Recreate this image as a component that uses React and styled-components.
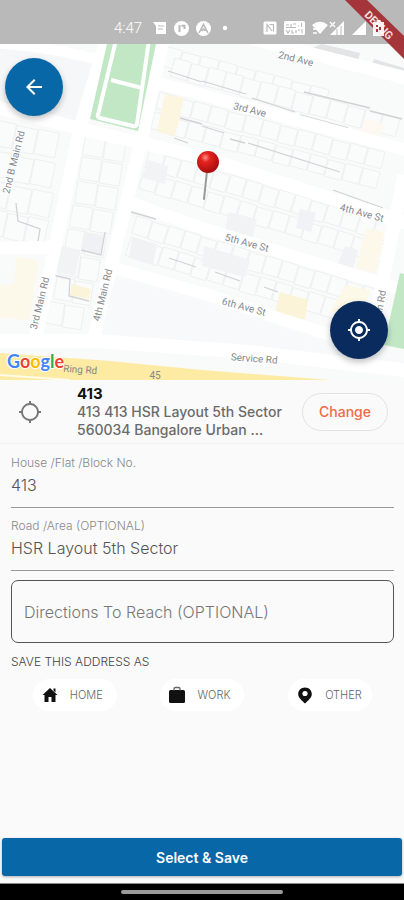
import { useState } from 'react'
import styled, { createGlobalStyle } from 'styled-components'
import { MdArrowBack, MdGpsFixed, MdGpsNotFixed } from 'react-icons/md'

const GlobalStyle = createGlobalStyle`
    * {
        box-sizing: border-box;
    }
    body {
        margin: 0;
        background: #fafafa;
        font-family: Inter, "Noto Sans", sans-serif;
    }
    button, input {
        font-family: inherit;
    }
`

const Page = styled.div`
    display: flex;
    flex-direction: column;
    min-height: 100vh;
    background: #fafafa;
`

const StatusBar = styled.header`
    position: relative;
    display: flex;
    align-items: center;
    justify-content: space-between;
    height: 44px;
    padding: 12px 20px 0 114px;
    background: #b9b9b9;
    color: #fff;
`

const StatusGroup = styled.div`
    position: relative;
    z-index: 2;
    display: flex;
    align-items: center;
    gap: 7px;

    & svg {
        display: block;
        flex-shrink: 0;
    }
`

const Clock = styled.time`
    margin-right: 4px;
    font-family: Roboto, sans-serif;
    font-size: 15px;
    font-weight: 300;
`

const DebugBanner = styled.svg`
    position: absolute;
    top: 0;
    right: 0;
    z-index: 1;
`

const MapArea = styled.section`
    position: relative;
    height: 336px;
    background: #f8f9fa;
`

const MapDrawing = styled.svg`
    display: block;
    width: 100%;
    height: 100%;
    font-family: Roboto, sans-serif;
`

const RoundButton = styled.button`
    position: absolute;
    display: flex;
    align-items: center;
    justify-content: center;
    width: 58px;
    height: 58px;
    padding: 0;
    border: 0;
    border-radius: 50%;
    color: #fff;
    font-size: 24px;
    box-shadow: 0 3px 6px rgba(0,0,0,.25);
`

const BackButton = styled(RoundButton)`
    top: 14px;
    left: 5px;
    background: #0868a7;
`

const LocateButton = styled(RoundButton)`
    right: 16px;
    bottom: 21px;
    background: #0a2b5e;
`

const AddressBar = styled.section`
    display: flex;
    align-items: center;
    height: 64px;
    padding: 0 16px 0 18px;
    border-bottom: 1px solid #f1f1f1;

    & > svg {
        flex-shrink: 0;
        font-size: 24px;
        color: #777;
    }
`

const AddressText = styled.div`
    flex: 1;
    min-width: 0;
    margin-left: 35px;
    font-size: 14px;
    font-weight: 500;
    line-height: 18px;
    color: #6a6a6a;
`

const AddressName = styled.h1`
    margin: 0;
    font-size: 15px;
    font-weight: 700;
    line-height: 18px;
    color: #111;
`

const ChangeButton = styled.button`
    flex-shrink: 0;
    height: 38px;
    padding: 0 16px;
    border: 1px solid #e3e3e5;
    border-radius: 19px;
    background: #fafafa;
    color: #ef6b48;
    font-size: 14px;
    font-weight: 500;
`

const Form = styled.form`
    display: flex;
    flex: 1;
    flex-direction: column;
`

const Fields = styled.div`
    display: flex;
    flex-direction: column;
    padding: 10px 10px 0 11px;
`

const Field = styled.div`
    display: flex;
    flex-direction: column;
    height: 54px;
    margin-bottom: 9px;
    border-bottom: 1px solid #999;

    & label {
        font-size: 12px;
        font-weight: 300;
        line-height: 18px;
        color: #888;
    }

    & input {
        width: 100%;
        height: 26px;
        padding: 0;
        border: 0;
        outline: 0;
        background: transparent;
        color: #555;
        font-size: 16px;
        font-weight: 300;
    }
`

const Directions = styled.input`
    height: 63px;
    padding: 0 12px;
    border: 1px solid #555;
    border-radius: 7px;
    outline: 0;
    background: transparent;
    color: #444;
    font-size: 16px;
    font-weight: 300;

    &::placeholder {
        color: #777;
        opacity: 1;
    }
`

const SaveAs = styled.fieldset`
    margin: 0;
    padding: 0;
    border: 0;

    & legend {
        padding: 10px 0 8px;
        font-size: 12px;
        font-weight: 300;
        line-height: 18px;
        color: #444;
    }
`

const Chips = styled.div`
    display: grid;
    grid-template-columns: repeat(3, 1fr);
    justify-items: center;
`

const Chip = styled.button`
    display: flex;
    align-items: center;
    gap: 10px;
    width: 84px;
    height: 32px;
    padding: 0 7px;
    border: 0;
    border-radius: 16px;
    background: #fff;
    color: #666;
    font-size: 11px;
    font-weight: 300;

    & svg {
        flex-shrink: 0;
    }
`

const SaveButton = styled.button`
    height: 38px;
    margin: auto 2px 7px;
    border: 0;
    border-radius: 3px;
    background: #0868a7;
    color: #fff;
    font-size: 14px;
    font-weight: 600;
    box-shadow: 0 1px 3px rgba(0,0,0,.3);
`

const NavBar = styled.footer`
    display: flex;
    align-items: center;
    justify-content: center;
    height: 17px;
    border-top: 1px solid #888;
    background: #000;
`

const NavHandle = styled.div`
    width: 40%;
    height: 4px;
    border-radius: 2px;
    background: #9b9b9b;
`

// [x, y, angle, count, lot width, lot height]
const lots = [
    [165, 46, 15, 9, 19, 22],
    [160, 92, 15, 13, 18, 19],
    [175, 58, 15, 13, 18, 21],
    [155, 112, 15, 13, 18, 19],
    [150, 150, 17, 15, 17, 20],
    [144, 171, 17, 15, 17, 20],
    [137, 216, 17, 15, 17, 20],
    [131, 237, 17, 14, 17, 21],
    [86, 133, 9, 2, 21, 24],
    [82, 157, 9, 2, 21, 24],
    [78, 181, 9, 2, 21, 24],
    [73, 205, 9, 2, 21, 24],
    [68, 229, 9, 2, 20, 24],
    [62, 253, 9, 2, 20, 24],
    [57, 277, 9, 2, 19, 24],
    [46, 301, 9, 2, 20, 24],
    [-4, 120, 12, 3, 22, 27],
    [-8, 150, 12, 3, 22, 27],
    [-10, 180, 12, 3, 22, 27],
    [-12, 208, 12, 3, 21, 27],
]

const blocks = [
    { points: '165,94 184,98 175,136 157,132', fill: '#fcf5df' },
    { points: '365,118 384,124 379,141 360,136', fill: '#fdf8f2' },
    { points: '366,228 384,232 376,273 356,268', fill: '#fdf9ea' },
    { points: '280,292 308,300 305,320 275,312', fill: '#fcf4d8' },
    { points: '345,285 370,290 362,318 330,312', fill: '#fdf9e8' },
    { points: '16,257 38,260 30,320 0,318 0,285 14,284', fill: '#fdf9ea' },
    { points: '72,284 91,289 89,299 70,295', fill: '#fcf4d8' },
    { points: '132,238 157,244 153,264 129,258', fill: '#f0f2f4' },
    { points: '148,160 168,166 165,184 143,178', fill: '#f1f3f5' },
    { points: '62,246 80,250 75,276 55,272', fill: '#f1f3f5' },
    { points: '84,232 104,237 101,255 81,249', fill: '#f0f1f4' },
    { points: '228,212 257,219 252,240 225,232', fill: '#f2f3f5' },
    { points: '300,209 316,213 311,232 296,228', fill: '#f1f2f5' },
    { points: '204,246 250,260 245,277 202,266', fill: '#f2f3f5' },
    { points: '345,246 358,250 353,268 338,263', fill: '#f1f2f5' },
    { points: '322,44 360,53 358,60 312,48', fill: '#e3e4e6' },
    { points: '374,59 404,68 404,75 371,67', fill: '#e3e4e6' },
]

const roads = [
    ['M-5 43 Q60 48 106 62', 10],
    ['M-5 107 L90 131 L202 157 L410 224', 13],
    ['M250 38 L410 79', 13],
    ['M155 82 L410 151', 12],
    ['M128 202 L202 228 L410 292', 12],
    ['M108 266 L202 293 L340 338', 12],
    ['M-5 248 L55 248', 13],
    ['M-5 341 L95 341 L250 352 L410 371', 14],
    ['M106 40 L80 127 L35 342', 13],
    ['M163 40 L143 133 L93 342', 13],
    ['M404 175 L370 345', 13],
]

const edges = [
    'M202 81 L246 94 M252 98 L295 112 M300 115 L348 128',
    'M304 92 L370 108 M370 111 L402 119',
    'M364 134 L392 147',
    'M168 71 L202 82 M180 118 L202 124 M174 138 L188 143',
    'M202 126 L224 133 M230 139 L245 143 M248 143 L340 172',
    'M333 190 L383 208',
    'M131 212 L156 219 M169 258 L196 267',
    'M215 272 L240 281 M264 287 L278 292',
    'M53 275 L70 279 L69 296 L89 301',
    'M16 203 L18 221 L40 229 L38 241',
    'M81 250 L101 255 L105 232',
]

const labels = [
    ['2nd Ave', 295, 62, 14],
    ['3rd Ave', 249, 113, 14],
    ['4th Ave St', 361, 216, 15],
    ['5th Ave St', 246, 246, 15],
    ['6th Ave St', 243, 310, 15],
    ['Service Rd', 254, 362, 4],
    ['2nd B Main Rd', 17, 163, -76],
    ['3rd Main Rd', 43, 304, -76],
    ['4th Main Rd', 106, 296, -76],
    ['in Rd', 384, 302, -80],
    ['Ring Rd', 80, 373, 4],
    ['45', 155, 379, 0],
]

function Lots({x, y, angle, count, width, height}) {
    return (
        <g transform={`translate(${x} ${y}) rotate(${angle})`}>
            {Array.from({length: count}, (_, i) => (
                <rect key={i} x={i * width} y={i % 3 === 1 ? 1 : 0} width={width - 1} height={height - 2} />
            ))}
        </g>
    )
}

function StreetMap() {
    return (
        <MapDrawing viewBox="0 44 404 336" preserveAspectRatio="xMidYMid slice" role="img" aria-label="Map">
            <defs>
                <radialGradient id="pinHead" cx="38%" cy="30%" r="70%">
                    <stop offset="0" stopColor="#ff8f86" />
                    <stop offset=".3" stopColor="#e3241f" />
                    <stop offset="1" stopColor="#a80c0c" />
                </radialGradient>
            </defs>
            <rect y="44" width="404" height="336" fill="#f9fafa" />
            <g fill="#fafbfb" stroke="#eceeef" strokeWidth=".8">
                {lots.map(([x, y, angle, count, width, height]) => (
                    <Lots key={`${x}-${y}`} {...{x, y, angle, count, width, height}} />
                ))}
            </g>
            {blocks.map(b => <polygon key={b.points} {...b} />)}
            <polygon points="110,276 200,302 330,344 404,360 404,366 100,340" fill="#f8f9fb" />
            <path d="M-5 44 L100 65 L82 122 L-5 100 Z" fill="#f6f7f9" />
            <path d={edges.join(' ')} fill="none" stroke="#d0d2d4" strokeWidth="1.3" />
            <g fill="none" stroke="#fff" strokeLinejoin="round">
                {roads.map(([d, width]) => <path key={d} d={d} strokeWidth={width} />)}
            </g>
            <polygon points="107,44 156,44 138,131 90,119" fill="#c1e7c5" />
            <path d="M116 40 L98 115 Q97 117 100 118 L133 126 Q136 127 137 124 L149 40 M111 80 L142 88"
                fill="none" stroke="#fff" strokeWidth="4" />
            <polygon points="400,273 404,274 404,349 384,345" fill="#c1e7c5" />
            <path d="M0 353 L110 361 L202 370 L330 380 L0 380 Z" fill="#fdeaa3" />
            <path d="M0 375 L70 380" stroke="#fffbe8" strokeWidth="2" />
            <g fill="#85888c" strokeWidth="2" paintOrder="stroke" fontSize="10" textAnchor="middle">
                {labels.map(([name, x, y, angle]) => (
                    <text key={name} transform={`translate(${x} ${y}) rotate(${angle})`}
                        stroke={y > 370 ? '#fdeaa3' : '#fff'}>{name}</text>
                ))}
            </g>
            <text x="7" y="368" fontFamily="Lato, sans-serif" fontSize="18" fontWeight="700"
                stroke="#fff" strokeWidth="2" paintOrder="stroke">
                <tspan fill="#4285f4">G</tspan><tspan fill="#ea4335">o</tspan><tspan fill="#fbbc05">o</tspan>
                <tspan fill="#4285f4">g</tspan><tspan fill="#34a853">l</tspan><tspan fill="#ea4335">e</tspan>
            </text>
            <path d="M207 171 L204 199" stroke="#999" strokeWidth="2" strokeLinecap="round" />
            <circle cx="208" cy="162" r="11" fill="url(#pinHead)" />
        </MapDrawing>
    )
}

function Status() {
    return (
        <StatusBar>
            <DebugBanner width="60" height="60" viewBox="0 0 60 60">
                <path d="M1 0 L23 0 L60 36 L60 59 Z" fill="#a4353b" />
                <text transform="translate(35 25) rotate(45)" y="4" textAnchor="middle" fill="#f3dcdc"
                    fontFamily="Roboto, sans-serif" fontSize="11" fontWeight="700">DEBUG</text>
            </DebugBanner>
            <StatusGroup>
                <Clock>4:47</Clock>
                <svg width="14" height="14" viewBox="0 0 14 14">
                    <path d="M0 1 H13 V13 H3 V5 Z" fill="#fff" />
                    <path d="M5 5 H11 M5 8 H10" stroke="#b9b9b9" strokeWidth="1.2" />
                </svg>
                <svg width="15" height="15" viewBox="0 0 15 15">
                    <circle cx="7.5" cy="7.5" r="7.5" fill="#fff" />
                    <path d="M5.5 4 V11 M7.5 4.8 H10.5 V8" fill="none" stroke="#b9b9b9" strokeWidth="2" />
                </svg>
                <svg width="15" height="15" viewBox="0 0 15 15">
                    <circle cx="7.5" cy="7.5" r="7.5" fill="#fff" />
                    <path d="M3 12 L7.5 3.5 L12 12 M5.5 10 L7.5 8 L9.5 10" fill="none" stroke="#b9b9b9" strokeWidth="1.6" />
                </svg>
                <svg width="14" height="14" viewBox="0 0 14 14">
                    <circle cx="7" cy="7" r="2.2" fill="#fff" />
                </svg>
            </StatusGroup>
            <StatusGroup>
                <svg width="14" height="14" viewBox="0 0 14 14">
                    <rect x=".5" y=".5" width="13" height="13" rx="1.5" fill="#fff" />
                    <path d="M4 11 V3.5 L9 10 M6.5 3.5 H10.5 V10.5" fill="none" stroke="#b9b9b9" strokeWidth="1.2" />
                </svg>
                <svg width="21" height="14" viewBox="0 0 21 14">
                    <rect width="21" height="14" rx="1.5" fill="#fff" />
                    <path d="M2 4 H5 M7 3 V6 M9 3 H12 M14 5 H15 M2 6.5 H12 M17.5 2 V6 M2 9 L4 12 L6 9 M8 9 V12 H10 M12 9 V12 M14 9 H16 M18 8 V12"
                        fill="none" stroke="#b9b9b9" strokeWidth="1.1" />
                </svg>
                <svg width="33" height="14" viewBox="0 0 33 14">
                    <path d="M0 4 Q8 -3 16 4 L8 13 Z" fill="#fff" />
                    <path d="M1 8 L4 8 M1 12 H5" stroke="#fff" strokeWidth="1.5" />
                    <path d="M32 0 V14 H18 Z" fill="#fff" />
                    <path d="M18 1 L23 6 M23 1 L18 6" stroke="#fff" strokeWidth="1.3" />
                    <path d="M29 5 V14 M25 8 V14" stroke="#b9b9b9" strokeWidth="1" />
                </svg>
                <svg width="14" height="14" viewBox="0 0 14 14">
                    <path d="M14 0 V14 H0 Z" fill="#fff" />
                </svg>
                <svg width="11" height="16" viewBox="0 0 11 16">
                    <path d="M3.5 0 H7.5 V2 H11 V16 H0 V2 H3.5 Z" fill="#fff" fillOpacity=".9" />
                    <path d="M3 5 H5 V7 H3 Z M6 7 H8 V10 H6 Z M3 9 H5 V12 H3 Z" fill="#a4353b" />
                </svg>
            </StatusGroup>
        </StatusBar>
    )
}

const HomeIcon = () => (
    <svg width="20" height="20" viewBox="0 0 20 20">
        <path d="M10 3 L17.5 10 H15.5 V17 H11.5 V12 H8.5 V17 H4.5 V10 H2.5 Z M13.5 3.5 H15.5 V7.5 L13.5 5.5 Z" fill="#111" />
    </svg>
)

const WorkIcon = () => (
    <svg width="20" height="20" viewBox="0 0 20 20">
        <rect x="2" y="5" width="16" height="13" rx="1.5" fill="#111" />
        <path d="M7 5.5 V4 Q7 2.5 8.5 2.5 H11.5 Q13 2.5 13 4 V5.5" fill="none" stroke="#666" strokeWidth="1.4" />
    </svg>
)

const PlaceIcon = () => (
    <svg width="20" height="20" viewBox="0 0 20 20">
        <path d="M10 2.5 C6.2 2.5 3.2 5.3 3.2 9 C3.2 12.8 7 15.5 10 18.5 C13 15.5 16.8 12.8 16.8 9 C16.8 5.3 13.8 2.5 10 2.5 Z" fill="#111" />
        <circle cx="10" cy="8.5" r="2.6" fill="#fff" />
    </svg>
)

const places = [
    { name: 'HOME', Icon: HomeIcon },
    { name: 'WORK', Icon: WorkIcon },
    { name: 'OTHER', Icon: PlaceIcon },
]

export default function App() {
    const [house, setHouse] = useState('413')
    const [road, setRoad] = useState('HSR Layout 5th Sector')
    const [directions, setDirections] = useState('')
    return (
        <Page>
            <GlobalStyle />
            <Status />
            <MapArea>
                <StreetMap />
                <BackButton aria-label="Back"><MdArrowBack /></BackButton>
                <LocateButton aria-label="My location"><MdGpsFixed /></LocateButton>
            </MapArea>
            <AddressBar>
                <MdGpsNotFixed />
                <AddressText>
                    <AddressName>413</AddressName>
                    413 413 HSR Layout 5th Sector<br />
                    560034 Bangalore Urban ...
                </AddressText>
                <ChangeButton>Change</ChangeButton>
            </AddressBar>
            <Form onSubmit={e => e.preventDefault()}>
                <Fields>
                    <Field>
                        <label htmlFor="house">House /Flat /Block No.</label>
                        <input id="house" value={house} onChange={({target: {value}}) => setHouse(value)} />
                    </Field>
                    <Field>
                        <label htmlFor="road">Road /Area (OPTIONAL)</label>
                        <input id="road" value={road} onChange={({target: {value}}) => setRoad(value)} />
                    </Field>
                    <Directions aria-label="Directions To Reach" placeholder="Directions To Reach (OPTIONAL)"
                        value={directions} onChange={({target: {value}}) => setDirections(value)} />
                    <SaveAs>
                        <legend>SAVE THIS ADDRESS AS</legend>
                        <Chips>
                            {places.map(({name, Icon}) => (
                                <Chip key={name} type="button"><Icon />{name}</Chip>
                            ))}
                        </Chips>
                    </SaveAs>
                </Fields>
                <SaveButton>Select &amp; Save</SaveButton>
            </Form>
            <NavBar><NavHandle /></NavBar>
        </Page>
    )
}
